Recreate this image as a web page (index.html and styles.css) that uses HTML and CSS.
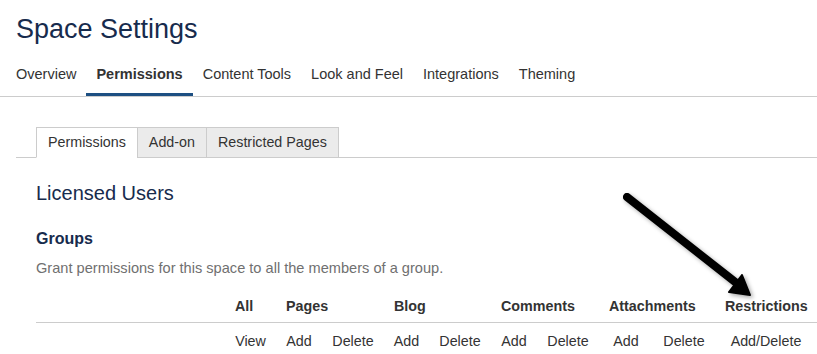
FILE: index.html
```html
<!DOCTYPE html>
<html lang="en">
<head>
    <meta charset="UTF-8">
    <meta name="viewport" content="width=device-width, initial-scale=1.0">
    <title>Space Settings</title>
    <link rel="stylesheet" href="styles.css">
</head>
<body>
    <div class="page">
        <div class="header">
            <h1>Space Settings</h1>
        </div>
        <ul class="nav">
            <li>Overview</li>
            <li class="active">Permissions</li>
            <li>Content Tools</li>
            <li>Look and Feel</li>
            <li>Integrations</li>
            <li>Theming</li>
        </ul>

        <div class="section">
            <ul class="tabs">
                <li class="active">Permissions</li>
                <li>Add-on</li>
                <li>Restricted Pages</li>
            </ul>
            <div class="panel">
                <h2>Licensed Users</h2>
                <h3>Groups</h3>
                <p class="desc">Grant permissions for this space to all the members of a group.</p>

                <div class="perm-grid">
                    <div class="th"></div>
                    <div class="th">All</div>
                    <div class="th span2">Pages</div>
                    <div class="th span2">Blog</div>
                    <div class="th span2">Comments</div>
                    <div class="th span2">Attachments</div>
                    <div class="th">Restrictions</div>

                    <div class="td"></div>
                    <div class="td">View</div>
                    <div class="td">Add</div>
                    <div class="td">Delete</div>
                    <div class="td">Add</div>
                    <div class="td">Delete</div>
                    <div class="td">Add</div>
                    <div class="td">Delete</div>
                    <div class="td">Add</div>
                    <div class="td">Delete</div>
                    <div class="td">Add/Delete</div>
                </div>
            </div>
        </div>

        <!-- annotation arrow -->
        <svg class="arrow" width="817" height="354" viewBox="0 0 817 354">
            <g class="arrow-shape">
                <line x1="627" y1="197" x2="739" y2="285" stroke="#000" stroke-width="8" stroke-linecap="round"/>
                <polygon points="750,295 742,275 729,292" fill="#000" stroke="#000" stroke-width="2" stroke-linejoin="round"/>
            </g>
        </svg>
    </div>
</body>
</html>
```

FILE: styles.css
```css
body {
    margin: 0;
    padding: 0;
    font-family: "Liberation Sans", Arial, sans-serif;
    font-size: 14px;
    color: #333;
    background: #fff;
}
.page {
    position: relative;
    width: 817px;
    height: 354px;
    overflow: hidden;
}
.header {
    padding: 13px 16px 0;
}
h1 {
    margin: 0;
    font-size: 27px;
    line-height: 32px;
    font-weight: normal;
    color: #172b4d;
}
.nav {
    list-style: none;
    margin: 19px 0 0;
    padding: 0 0 0 6px;
    display: flex;
    border-bottom: 1px solid #ccc;
    font-size: 14.5px;
}
.nav li {
    padding: 0 10px 9px;
    line-height: 20px;
    border-bottom: 3px solid transparent;
    color: #333;
}
.nav li.active {
    font-weight: bold;
    border-bottom-color: #1d4f82;
}
.section {
    padding: 30px 0 0 16px;
}
.tabs {
    list-style: none;
    margin: 0;
    padding: 0 0 0 20px;
    display: flex;
    border-bottom: 1px solid #ccc;
    font-size: 14.3px;
}
.tabs li {
    padding: 0 11px;
    line-height: 29px;
    border: 1px solid #ccc;
    margin-bottom: -1px;
    background: #ebebeb;
    color: #333;
}
.tabs li + li {
    margin-left: -1px;
}
.tabs li.active {
    background: #fff;
    border-bottom-color: #fff;
}
.panel {
    padding-left: 20px;
}
h2 {
    margin: 23px 0 0;
    font-size: 20px;
    line-height: 24px;
    font-weight: normal;
    color: #172b4d;
}
h3 {
    margin: 24px 0 0;
    font-size: 16px;
    line-height: 20px;
    color: #172b4d;
}
.desc {
    margin: 9px 0 0;
    line-height: 20px;
    font-size: 14.6px;
    color: #707070;
}
.perm-grid {
    margin-top: 18px;
    display: grid;
    grid-template-columns: 189px 51px 46px 62px 45px 62px 46px 62px 54px 62px 102px;
    font-size: 14.3px;
}
.th {
    font-weight: bold;
    line-height: 20px;
    padding: 0 0 6px 10px;
    border-bottom: 1px solid #ccc;
    white-space: nowrap;
}
.th.span2 {
    grid-column: span 2;
}
.td {
    line-height: 20px;
    padding-top: 8px;
    text-align: center;
    white-space: nowrap;
}
.arrow {
    position: absolute;
    left: 0;
    top: 0;
    pointer-events: none;
}
.arrow-shape {
    filter: drop-shadow(2px 2px 2px rgba(0, 0, 0, 0.35));
}
```
